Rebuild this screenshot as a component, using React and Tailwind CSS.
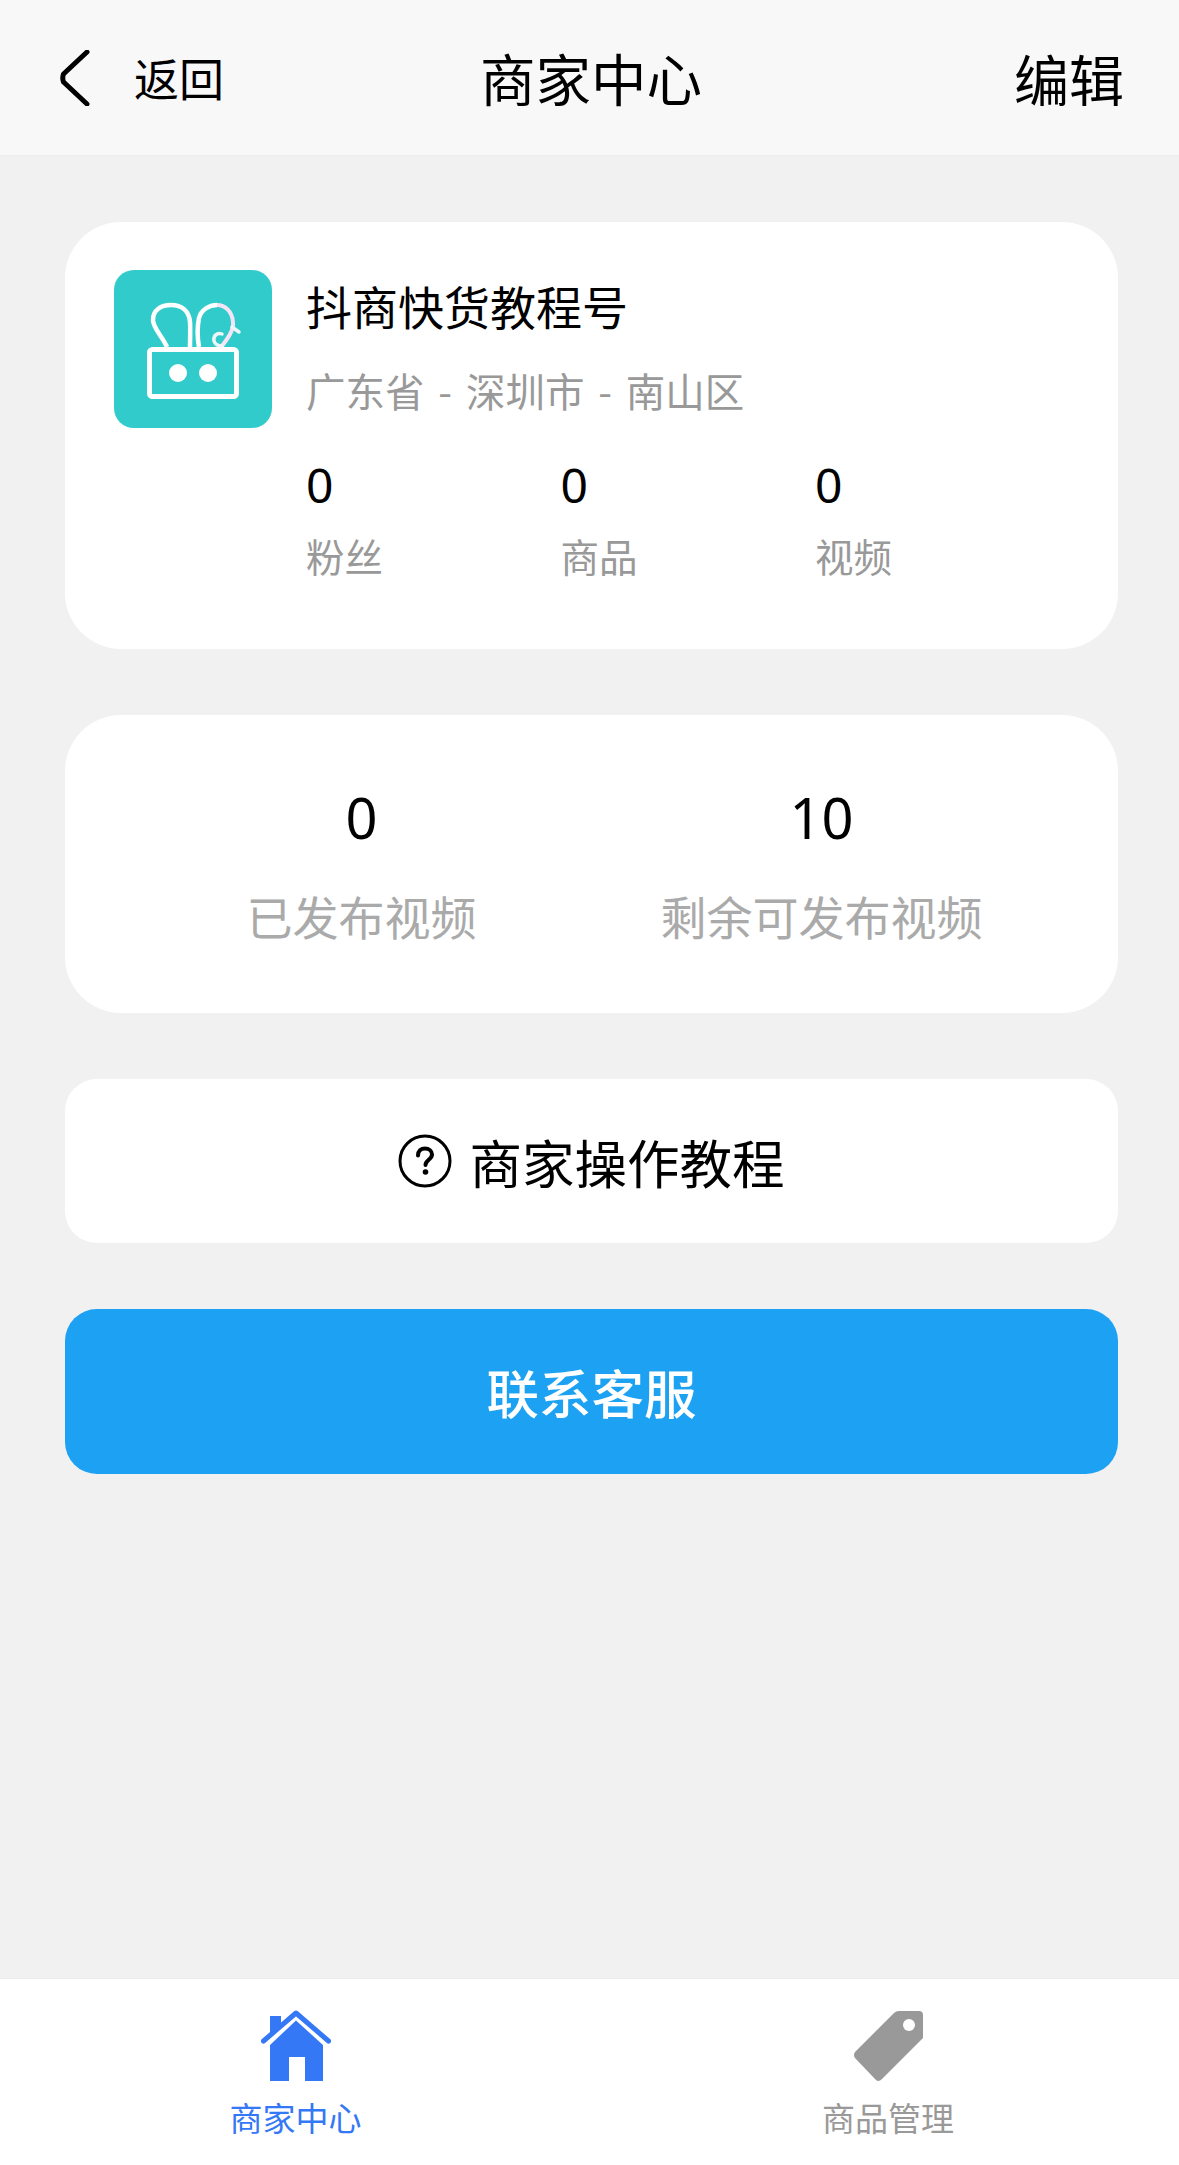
const font = { fontFamily: '"Noto Sans CJK SC", "Noto Sans", sans-serif' };

function Stat({ value, label }) {
  return (
    <div className="w-[254.5px] flex flex-col">
      <div className="text-[48px] leading-[60px] text-black font-['Noto_Sans']">{value}</div>
      <div className="text-[38.5px] leading-[54px] mt-[13px] text-[#999999]">{label}</div>
    </div>
  );
}

function Logo() {
  return (
    <div className="w-[158px] h-[158px] rounded-[20px] bg-[#30cbca] shrink-0">
      <svg viewBox="0 0 158 158" width="158" height="158" fill="none">
        <rect x="35.5" y="79.5" width="87" height="47" rx="3" stroke="#fff" strokeWidth="5" />
        <circle cx="64" cy="103" r="9" fill="#fff" />
        <circle cx="94" cy="103" r="9" fill="#fff" />
        <path d="M53 77 C48 66 39 58 39 50 C39 40 47 35 57 35 C68 35 75 41 76 52 C76.500 60 76 68 76 77" stroke="#fff" strokeWidth="4.500" />
        <path d="M85 77 C83 66 83 58 85 48 C87 40 95 35 103 35" stroke="#fff" strokeWidth="4.500" />
        <path d="M103 35 C111 35 118 41 119 52 C120 60 114 68 108 76" stroke="#f6e4f6" strokeWidth="4" />
        <path d="M118 57 L125 62 M108 64 C103 62 99 66 100 71 C101 74 104 76 108 76" stroke="#eef6f8" strokeWidth="3.500" strokeLinecap="round" />
      </svg>
    </div>
  );
}

function HomeIcon() {
  return (
    <svg width="70" height="72" viewBox="0 0 70 72" className="block">
      <path d="M9 35 L35 10.500 L62 35 L62 71 L44 71 L44 47 L28 47 L28 71 L9 71 Z" fill="#3478f6" />
      <path d="M9 6 L20 6 L20 14 L9 24 Z" fill="#3478f6" />
      <path d="M2.500 31 L35 3 L67.500 31" fill="none" stroke="#3478f6" strokeWidth="5" strokeLinecap="round" strokeLinejoin="round" />
    </svg>
  );
}

function TagIcon() {
  return (
    <svg width="70" height="72" viewBox="0 0 70 72" className="block">
      <path d="M46 1 L66 1 Q70 1 70 5 L70 28 L29 69 Q25 73 22 69 L2 48 Q0 45 2 42 L41 3 Q43 1 46 1 Z" fill="#999999" />
      <circle cx="56" cy="15" r="6" fill="#fff" />
    </svg>
  );
}

export default function App() {
  return (
    <div style={font} className="w-[1179px] h-[2165px] flex flex-col bg-[#f1f1f1]">
      <header className="h-[156px] shrink-0 bg-[#f8f8f8] border-b border-[#ececec] relative flex items-center justify-between pl-[59px] pr-[55px]">
        <div className="flex items-center">
          <svg width="32" height="56" viewBox="0 0 32 56" fill="none">
            <path d="M28 2 L4.500 24 Q3 28 4.500 32 L28 54" stroke="#000" strokeWidth="5" strokeLinecap="round" strokeLinejoin="round" />
          </svg>
          <span className="text-[45px] leading-none text-black ml-[43px]">返回</span>
        </div>
        <div className="absolute left-0 right-0 pl-[3px] text-center text-[55.500px] leading-none text-black pointer-events-none">商家中心</div>
        <span className="text-[55px] leading-none text-black">编辑</span>
      </header>

      <main className="flex-1 pl-[65px] pr-[61px] pt-[66px] flex flex-col gap-[66px]">
        <section className="h-[427px] bg-white rounded-[56px] pt-[48px] pl-[49px] flex gap-[34px]">
          <Logo />
          <div className="flex flex-col">
            <div className="text-[46px] leading-[60px] mt-[5px] text-black">抖商快货教程号</div>
            <div className="text-[39.500px] leading-[56px] mt-[27px] text-[#999999] [word-spacing:5px]">广东省 - 深圳市 - 南山区</div>
            <div className="flex mt-[37px]">
              <Stat value="0" label="粉丝" />
              <Stat value="0" label="商品" />
              <Stat value="0" label="视频" />
            </div>
          </div>
        </section>

        <section className="h-[298px] bg-white rounded-[56px] grid grid-cols-2 px-[66.500px]">
          <div className="flex flex-col items-center pt-[69px]">
            <div className="text-[56px] leading-[66px] text-black font-['Noto_Sans']">0</div>
            <div className="text-[46px] leading-[64px] mt-[33px] text-[#aaaaaa]">已发布视频</div>
          </div>
          <div className="flex flex-col items-center pt-[69px] whitespace-nowrap">
            <div className="text-[56px] leading-[66px] text-black font-['Noto_Sans']">10</div>
            <div className="text-[46px] leading-[64px] mt-[33px] text-[#aaaaaa]">剩余可发布视频</div>
          </div>
        </section>

        <section className="h-[164px] bg-white rounded-[32px] flex items-center justify-center gap-[17px]">
          <svg width="54" height="54" viewBox="0 0 54 54" fill="none">
            <circle cx="27" cy="27" r="25" stroke="#000" strokeWidth="3" />
            <path d="M20 21.500 C20 17 23 14.500 27 14.500 C31 14.500 34 17 34 20.500 C34 25.500 27.500 26 27.500 31" stroke="#000" strokeWidth="4" strokeLinecap="round" />
            <circle cx="27.500" cy="38" r="2.800" fill="#000" />
          </svg>
          <span className="text-[52.500px] leading-none text-black">商家操作教程</span>
        </section>

        <button className="h-[165px] bg-[#1da1f2] rounded-[32px] text-white text-[52.500px] font-medium leading-none">联系客服</button>
      </main>

      <footer className="h-[187px] shrink-0 bg-white border-t border-[#ececec] flex">
        <div className="w-[591px] flex flex-col items-center pt-[31px]">
          <HomeIcon />
          <span className="text-[33px] leading-[44px] mt-[13px] text-[#3478f6]">商家中心</span>
        </div>
        <div className="flex-1 flex flex-col items-center pt-[31px] pl-[6px]">
          <TagIcon />
          <span className="text-[33px] leading-[44px] mt-[13px] text-[#999999]">商品管理</span>
        </div>
      </footer>
    </div>
  );
}
